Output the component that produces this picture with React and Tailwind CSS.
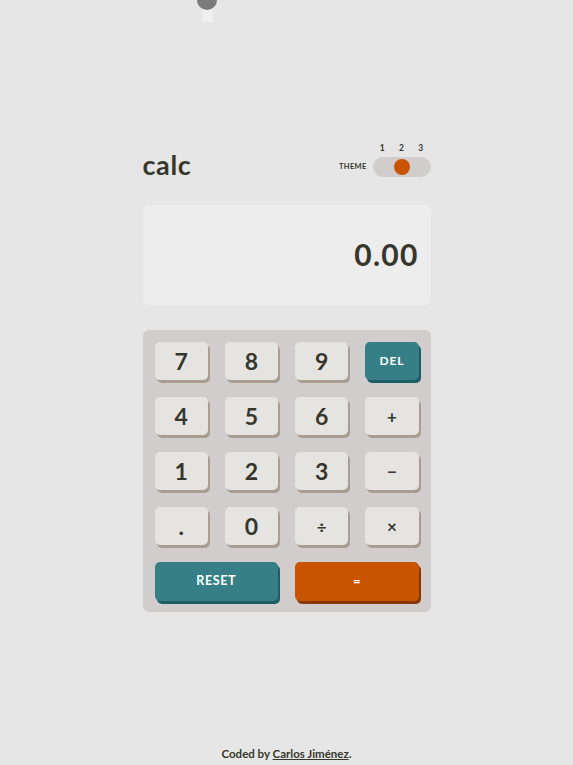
import React from "react";

const font = { fontFamily: "Lato, 'Noto Sans', sans-serif" };

function Key({ children, cls = "", variant = "light" }) {
  const base =
    variant === "light"
      ? "bg-[#e5e4e1] text-[#36362c] shadow-[2px_3px_0_#a79e91]"
      : variant === "teal"
      ? "bg-[#377f86] text-white shadow-[2px_3px_0_#1b5f65]"
      : "bg-[#c85402] text-white shadow-[2px_3px_0_#873901]";
  return (
    <button
      className={`h-[38px] rounded-[5px] flex items-center justify-center font-bold ${base} ${cls}`}
      style={font}
    >
      {children}
    </button>
  );
}

export default function App() {
  const digit = "text-[23px] leading-none pt-[1px]";
  const op = "text-[17px] leading-none";
  return (
    <div className="relative min-h-[765px] bg-[#e6e6e6] text-[#36362c]" style={font}>
      <div className="absolute left-[202px] top-[8px] w-[11px] h-[14px] bg-[#efefef]" />
      <div className="absolute left-[197px] top-[-10px] w-[20px] h-[20px] rounded-full bg-[#7b7b7b]" />

      <main className="w-[288px] mx-auto pt-[144px]">
        <header className="flex items-end justify-between">
          <h1 className="text-[27px] font-bold leading-none tracking-[0.6px] mb-[-1px]">calc</h1>
          <div className="flex items-end gap-[6px]">
            <span className="text-[7.5px] font-bold tracking-[0.3px] mb-[5px]">THEME</span>
            <div className="flex flex-col gap-[4px] w-[58px]">
              <div className="grid grid-cols-3 text-center text-[8.5px] font-bold leading-[9px]">
                <span>1</span>
                <span>2</span>
                <span>3</span>
              </div>
              <div className="h-[20px] rounded-full bg-[#d2cdcd] flex items-center justify-center">
                <div className="w-[16px] h-[16px] rounded-full bg-[#c85402]" />
              </div>
            </div>
          </div>
        </header>

        <section className="mt-[28px] h-[100px] rounded-[6px] bg-[#ededed] flex items-center justify-end pr-[12px]">
          <span className="text-[30px] font-bold leading-none tracking-[1.2px] mb-[3px]">0.00</span>
        </section>

        <section className="mt-[25px] rounded-[6px] bg-[#d2cdcd] px-[12px] pt-[12px] pb-[11px] grid grid-cols-4 gap-[17px]">
          <Key cls={digit}>7</Key>
          <Key cls={digit}>8</Key>
          <Key cls={digit}>9</Key>
          <Key variant="teal" cls="text-[12px] tracking-[0.8px]">DEL</Key>
          <Key cls={digit}>4</Key>
          <Key cls={digit}>5</Key>
          <Key cls={digit}>6</Key>
          <Key cls={op}>+</Key>
          <Key cls={digit}>1</Key>
          <Key cls={digit}>2</Key>
          <Key cls={digit}>3</Key>
          <Key cls={op}>−</Key>
          <Key cls={digit}>.</Key>
          <Key cls={digit}>0</Key>
          <Key cls={op}>÷</Key>
          <Key cls={op}>×</Key>
          <Key variant="teal" cls="col-span-2 text-[12.5px] tracking-[0.6px] h-[39px]">RESET</Key>
          <Key variant="orange" cls="col-span-2 text-[13px] h-[39px]">=</Key>
        </section>
      </main>

      <footer className="mt-[135px] text-center text-[11.5px] font-bold leading-[14px]">
        Coded by{" "}
        <a className="underline">Carlos Jiménez</a>.
      </footer>
    </div>
  );
}
